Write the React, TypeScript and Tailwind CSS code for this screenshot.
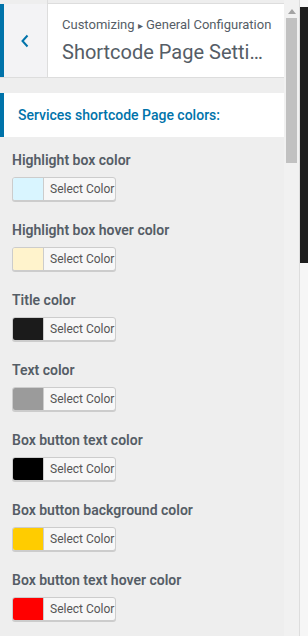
import React from "react";

const items = [
  { label: "Highlight box color", color: "#d9f5ff" },
  { label: "Highlight box hover color", color: "#fff3cc" },
  { label: "Title color", color: "#1b1b1b" },
  { label: "Text color", color: "#9b9b9b" },
  { label: "Box button text color", color: "#000000" },
  { label: "Box button background color", color: "#ffcc00" },
  { label: "Box button text hover color", color: "#ff0000" },
];

function ColorPicker({ color }: { color: string }) {
  return (
    <div className="flex h-[24px] w-[104px] overflow-hidden rounded-[3px] border border-[#ccc] bg-[#f7f7f7] shadow-[0_1px_0_#ccc]">
      <span className="w-[31px] shrink-0 border-r border-[#ccc]" style={{ backgroundColor: color }} />
      <span className="flex flex-1 items-center whitespace-nowrap pl-[6px] text-[12px] text-[#555]">Select Color</span>
    </div>
  );
}

export default function App() {
  return (
    <div className="flex h-[636px] w-[308px] overflow-hidden bg-[#eee] font-['Roboto',sans-serif]">
      <div className="flex w-[284px] shrink-0 flex-col overflow-hidden">
        {/* tail of the panel above */}
        <div className="flex h-[4px] shrink-0">
          <div className="w-[48px] border-r border-[#ddd] bg-[#eee]" />
          <div className="flex-1 border-b border-[#ddd] bg-[#eee]" />
        </div>

        {/* section header */}
        <div className="flex h-[74px] shrink-0 border-b border-[#ddd] bg-white">
          <div className="w-[4px] bg-[#0073aa]" />
          <div className="flex w-[44px] items-center justify-center border-r border-[#ddd] bg-[#f3f3f5]">
            <svg width="10" height="14" viewBox="0 0 10 14" className="mr-[2px]">
              <path d="M7.5 1.5 L2.5 7 L7.5 12.5" fill="none" stroke="#0073aa" strokeWidth="2" />
            </svg>
          </div>
          <div className="flex min-w-0 flex-1 flex-col pl-[14px] pr-[12px] pt-[9px]">
            <span className="whitespace-nowrap text-[13px] leading-[24px] text-[#555d66]">
              Customizing <span className="text-[10px]">▸</span> General Configuration
            </span>
            <span className="truncate text-[20px] leading-[28px] text-[#555d66]">
              Shortcode Page Settings
            </span>
          </div>
        </div>

        <div className="h-[15px] shrink-0" />

        <div className="flex h-[44px] shrink-0 items-center border-l-4 border-[#0073aa] bg-white pl-[14px]">
          <span className="text-[14px] font-medium text-[#0073aa]">Services shortcode Page colors:</span>
        </div>

        <div className="flex shrink-0 flex-col pl-[12px] pt-[13px]">
          {items.map((it) => (
            <div key={it.label} className="flex h-[70px] shrink-0 flex-col">
              <span className="text-[14px] font-semibold leading-[20px] text-[#555d66]">{it.label}</span>
              <div className="mt-[7px]">
                <ColorPicker color={it.color} />
              </div>
            </div>
          ))}
        </div>
      </div>

      {/* scrollbar */}
      <div className="flex w-[15px] shrink-0 flex-col items-center bg-[#f1f1f1]">
        <svg width="8" height="5" viewBox="0 0 8 5" className="mt-[9px]">
          <path d="M0 5 L4 0 L8 5 Z" fill="#a3a3a3" />
        </svg>
        <div className="mt-[4px] h-[145px] w-[11px] bg-[#c1c1c1]" />
      </div>

      {/* preview edge */}
      <div className="flex w-[9px] shrink-0 flex-col border-l border-[#ddd]">
        <div className="h-[7px] bg-[#f7f7f7]" />
        <div className="h-[256px] bg-[#1e1e1e]" />
        <div className="flex-1 bg-[#f6f6f6]" />
      </div>
    </div>
  );
}
